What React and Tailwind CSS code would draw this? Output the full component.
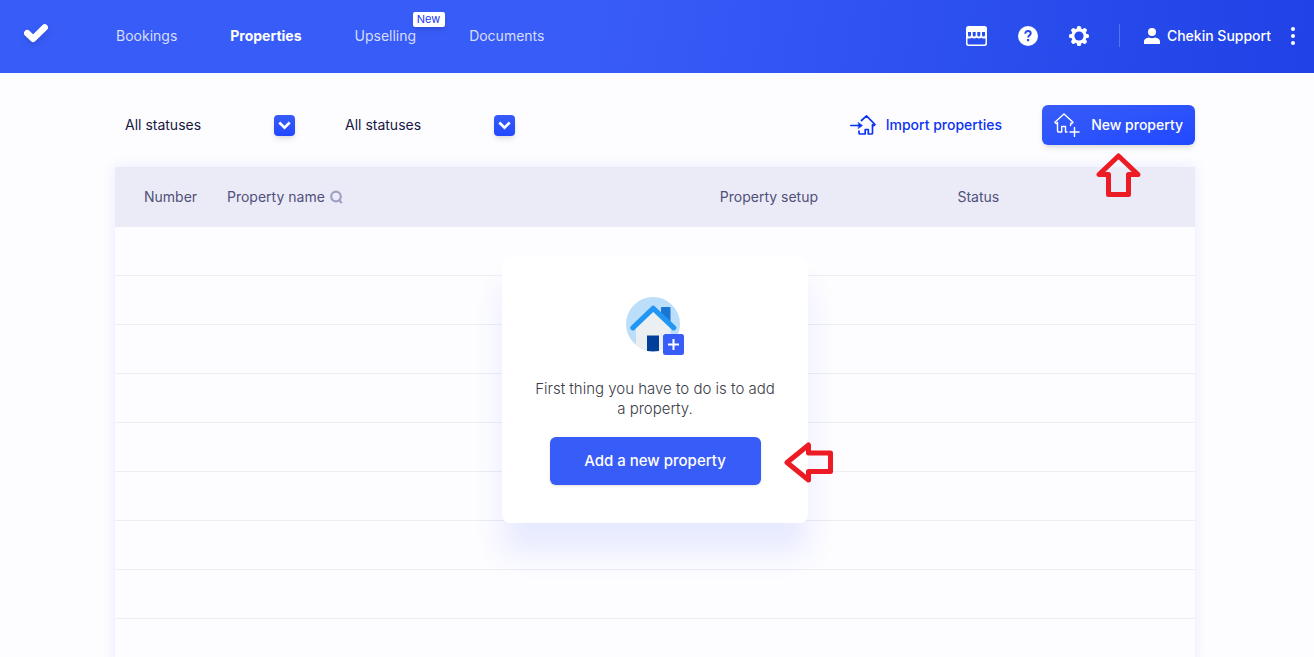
import React, { useState } from 'react';

const navLinks = [
  { label: 'Bookings', href: '#bookings' },
  { label: 'Properties', href: '#properties', active: true },
  { label: 'Upselling', href: '#upselling', badge: 'New' },
  { label: 'Documents', href: '#documents' },
];

const statusOptions = [
  { value: 'all', label: 'All statuses' },
  { value: 'active', label: 'Active' },
  { value: 'inactive', label: 'Inactive' },
];

const emptyRows = Array.from({ length: 9 }, (_, i) => i);

const LogoIcon = () => (
  <svg width="24" height="19" viewBox="0 0 24 19" fill="none" className="drop-shadow-md">
    <path d="M3.2 9.2 9.2 14.8 20.8 3.4" stroke="#fff" strokeWidth="6.400" strokeLinecap="round" strokeLinejoin="round" />
  </svg>
);

const StoreIcon = () => (
  <svg width="21" height="20" viewBox="0 0 21 20" fill="none">
    <path d="M2.5 0h16A2.5 2.5 0 0 1 21 2.500V17.500A2.500 2.500 0 0 1 18.500 20h-16A2.500 2.500 0 0 1 0 17.500V2.500A2.500 2.500 0 0 1 2.500 0Z" fill="#fff" />
    <path d="M2 6h3v3a1.500 1.500 0 0 1-3 0ZM6.700 6h3v3a1.500 1.500 0 0 1-3 0ZM11.300 6h3v3a1.500 1.500 0 0 1-3 0ZM16 6h3v3a1.500 1.500 0 0 1-3 0Z" fill="#2a4df0" />
    <path d="M1.500 12.500c1.500.3 3 0 4.200-.8 1.400 1.100 3.200 1.100 4.800 0 1.500 1.100 3.400 1.100 4.800 0 1.200.8 2.700 1.100 4.200.8V17a1.500 1.500 0 0 1-1.500 1.500H3A1.500 1.500 0 0 1 1.500 17Z" fill="#2a4df0" />
  </svg>
);

const HelpIcon = () => (
  <svg width="20" height="20" viewBox="0 0 20 20" fill="none">
    <circle cx="10" cy="10" r="10" fill="#fff" />
    <path d="M7.300 7.700c0-1.600 1.200-2.600 2.700-2.600s2.700.9 2.700 2.300c0 1.900-2.500 2-2.500 4.200" stroke="#284bee" strokeWidth="2" />
    <rect x="9" y="13" width="2.200" height="2.200" fill="#284bee" />
  </svg>
);

const GearIcon = () => (
  <svg width="20" height="20" viewBox="0 0 20 20">
    <g fill="#fff">
      {[0, 45, 90, 135].map((angle) => (
        <rect key={angle} x="7.900" y="0" width="4.200" height="20" rx="1.600" transform={`rotate(${angle} 10 10)`} />
      ))}
      <circle cx="10" cy="10" r="7.700" />
    </g>
    <circle cx="10" cy="10" r="4.600" fill="#274aed" />
  </svg>
);

const UserIcon = () => (
  <svg width="16" height="16" viewBox="0 0 16 16" fill="#fff">
    <circle cx="8" cy="4" r="4" />
    <path d="M0 16v-2.500C0 11 2.500 10 5 9.500c1.800 1 4.200 1 6 0 2.500.5 5 1.500 5 4V16Z" />
  </svg>
);

const DotsIcon = () => (
  <svg width="4" height="18" viewBox="0 0 4 18" fill="#fff">
    <circle cx="2" cy="2" r="2" />
    <circle cx="2" cy="9" r="2" />
    <circle cx="2" cy="16" r="2" />
  </svg>
);

const ImportIcon = () => (
  <svg width="26" height="20" viewBox="0 0 26 20" fill="none" stroke="#0a33f5" strokeWidth="1.700" strokeLinejoin="round" strokeLinecap="round">
    <path d="M11.500 5.500 16.500.9 25 9.500l-1.200 1.200-1.300-1V18a1 1 0 0 1-1 1h-3.200v-4.500h-3.100V19H10a1 1 0 0 1-1-1v-2" />
    <path d="M.8 10.500H9" />
    <path d="M8.500 7.500 12.500 10.500l-4 3Z" fill="#0a33f5" strokeWidth="0.500" />
  </svg>
);

const NewHomeIcon = () => (
  <svg width="26" height="24" viewBox="0 0 26 24" fill="none" stroke="#fff" strokeWidth="1.400" strokeLinejoin="round" strokeLinecap="round">
    <path d="M16.500 12.500 17 10l.8.600L19 9.300 10 .9.900 9.300l1.200 1.300L3.500 9.500V18a1 1 0 0 0 1 1h3.200v-5.500h3.800V19h1.500" />
    <path d="M20.500 14.500v9M16 19h9" />
  </svg>
);

const SearchIcon = () => (
  <svg width="13" height="14" viewBox="0 0 13 14" fill="none" stroke="#a19fc5" strokeWidth="2.200">
    <circle cx="6" cy="6.500" r="4.800" />
    <path d="m8.500 9.500 3.300 3.600" />
  </svg>
);

const HouseIllustration = () => (
  <svg width="58" height="58" viewBox="0 0 58 58" fill="none">
    <circle cx="27" cy="27" r="27" fill="#bbdefb" />
    <path d="M36 10h7.500a1 1 0 0 1 1 1v16L35 18v-7a1 1 0 0 1 1-1Z" fill="#1976d2" />
    <path d="M27.200 13 44.500 30v17.500q-8 6.500-17.500 6.500-9.500 0-17-6.500V30Z" fill="#eceff1" />
    <path d="M6.800 30.800 27.200 11.300 47.800 30.800" stroke="#2196f3" strokeWidth="5.200" strokeLinecap="round" strokeLinejoin="round" />
    <path d="M21 38.500h12V54q-6 .8-12 0Z" fill="#01409a" />
    <rect x="37" y="37" width="21" height="21" rx="2.500" fill="#385cf8" />
    <path d="M47.500 42v11M42 47.500h11" stroke="#fff" strokeWidth="2" />
  </svg>
);

const StatusSelect = ({ label }) => {
  const [value, setValue] = useState('all');

  return (
    <div className="relative w-[170px]">
      <select
        aria-label={label}
        value={value}
        onChange={(e) => setValue(e.target.value)}
        className="block w-full h-10 appearance-none bg-transparent text-sm text-[#161643] cursor-pointer focus:outline-none"
      >
        {statusOptions.map((opt) => (
          <option key={opt.value} value={opt.value}>{opt.label}</option>
        ))}
      </select>
      <span className="absolute right-0 top-[10px] w-[21px] h-[21px] rounded bg-linear-to-b from-[#385cf8] to-[#2148ff] shadow-md flex items-center justify-center pointer-events-none">
        <svg width="13" height="9" viewBox="0 0 13 9" fill="none">
          <path d="m1.300 1.500 5.200 5.200 5.200-5.200" stroke="#fff" strokeWidth="2.600" />
        </svg>
      </span>
    </div>
  );
};

const Header = () => (
  <header className="h-[73px] shrink-0 flex items-center justify-between pl-6 pr-[19px] pb-[2px] text-white bg-[linear-gradient(100deg,#385cf8_45%,#2042e6)]">
    <div className="flex items-center">
      <a href="#home" aria-label="Home" className="mr-[68px] pb-1">
        <LogoIcon />
      </a>
      <nav className="flex items-center gap-[53px] text-sm">
        {navLinks.map((link) => (
          <a
            key={link.label}
            href={link.href}
            className={link.active ? 'relative font-bold' : 'relative text-[#d7defd]'}
          >
            {link.label}
            {link.badge && (
              <span className="absolute left-[58px] -top-[14px] h-[15px] w-8 rounded-xs bg-white text-center text-[11px] leading-[15px] text-[#1a37f5] shadow-md">
                {link.badge}
              </span>
            )}
          </a>
        ))}
      </nav>
    </div>
    <div className="flex items-center">
      <div className="flex items-center gap-[31px]">
        <button aria-label="Marketplace"><StoreIcon /></button>
        <button aria-label="Help"><HelpIcon /></button>
        <button aria-label="Settings"><GearIcon /></button>
      </div>
      <div className="ml-[30px] mr-6 h-[23px] w-px bg-[#5573f6]" />
      <button className="flex items-center gap-[7px] text-sm font-medium">
        <UserIcon />
        Chekin Support
      </button>
      <button aria-label="More" className="ml-5"><DotsIcon /></button>
    </div>
  </header>
);

const EmptyState = () => (
  <div className="absolute left-1/2 top-[90px] w-[306px] -translate-x-1/2 rounded-lg bg-white px-6 pt-10 pb-[38px] flex flex-col items-center shadow-[0_30px_30px_rgba(38,65,255,0.1)]">
    <HouseIllustration />
    <p className="mt-6 w-[250px] text-center text-[15px] leading-5 font-light text-[#3c3c48]">
      First thing you have to do is to add a property.
    </p>
    <button className="mt-[18px] h-12 w-[211px] rounded-md bg-[#385cf8] text-[15px] font-medium text-white shadow-sm">
      Add a new property
    </button>
    <svg width="49" height="41" viewBox="0 0 49 41" fill="none" className="absolute left-[282px] top-[185px]">
      <path d="M3 20.500 24.500 3V11h22v18.500h-22V38Z" stroke="#ed1c24" strokeWidth="5" strokeLinejoin="round" />
    </svg>
  </div>
);

const PropertiesTable = () => (
  <div className="relative mt-[22px] shadow-[0_0_12px_rgba(38,65,255,0.1)]">
    <table className="w-full table-fixed border-separate border-spacing-0 text-left text-sm text-[#50507a]">
      <thead>
        <tr className="h-[60px] bg-[#ebebf7]">
          <th className="w-[112px] pl-[29px] font-normal">Number</th>
          <th className="font-normal">
            <span className="flex items-center gap-[5px]">
              Property name
              <button aria-label="Search by property name"><SearchIcon /></button>
            </span>
          </th>
          <th className="w-[22%] font-normal">Property setup</th>
          <th className="w-[22%] font-normal">Status</th>
        </tr>
      </thead>
      <tbody className="bg-[#fdfdff]">
        {emptyRows.map((row) => (
          <tr key={row} className="h-[49px]">
            <td colSpan={4} className="border-b border-[#ededf3]" />
          </tr>
        ))}
      </tbody>
    </table>
    <EmptyState />
  </div>
);

const App = () => {
  return (
    <div className="h-screen flex flex-col overflow-hidden bg-[#fdfdff] font-[Inter,sans-serif]">
      <Header />
      <main className="flex-1 min-h-0 pt-8 pr-1">
        <div className="mx-auto w-full max-w-[1080px]">
          <div className="flex items-center justify-between pl-[10px]">
            <div className="flex gap-[50px]">
              <StatusSelect label="Property status" />
              <StatusSelect label="Setup status" />
            </div>
            <div className="flex items-center gap-10">
              <button className="flex items-center gap-[10px] text-sm font-medium text-[#0a33f5]">
                <ImportIcon />
                Import properties
              </button>
              <div className="relative">
                <button className="h-10 w-[153px] rounded-md bg-linear-to-br from-[#385cf8] to-[#2148ff] px-3 flex items-center justify-between text-sm font-medium text-white shadow-md">
                  <NewHomeIcon />
                  New property
                </button>
                <svg width="45" height="44" viewBox="0 0 45 44" fill="none" className="absolute left-[54px] top-12 z-10">
                  <path d="M22.500 3 3 21.500h9.500v20h20v-20H42Z" stroke="#ed1c24" strokeWidth="5" strokeLinejoin="round" />
                </svg>
              </div>
            </div>
          </div>
          <PropertiesTable />
        </div>
      </main>
    </div>
  );
};

export default App;
